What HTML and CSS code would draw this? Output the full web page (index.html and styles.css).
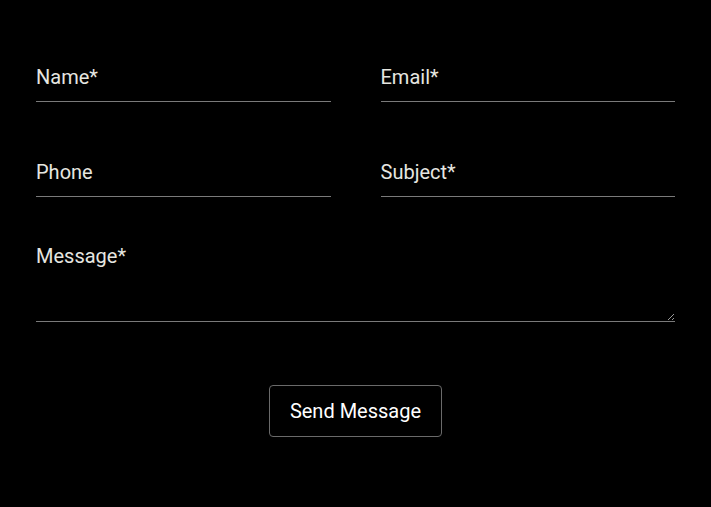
FILE: index.html
```html
<!DOCTYPE html>
<html lang="en">
<head>
<meta charset="utf-8">
<link rel="stylesheet" href="styles.css">
</head>
<body>
<form class="contact">
  <div class="row">
    <input class="field" type="text" placeholder="Name*">
    <input class="field" type="email" placeholder="Email*">
  </div>
  <div class="row">
    <input class="field" type="tel" placeholder="Phone">
    <input class="field" type="text" placeholder="Subject*">
  </div>
  <textarea class="field message" placeholder="Message*"></textarea>
  <div class="actions">
    <button class="send" type="button">Send Message</button>
  </div>
</form>
</body>
</html>
```
FILE: styles.css
```css
html, body {
  margin: 0;
  background: #000;
  color-scheme: dark;
}
body {
  font-family: Roboto, "Liberation Sans", sans-serif;
}
.contact {
  padding: 51px 36px 0 36px;
  display: flex;
  flex-direction: column;
  gap: 44px;
}
.row {
  display: flex;
  gap: 50px;
}
.field {
  flex: 1;
  min-width: 0;
  box-sizing: border-box;
  height: 51px;
  background: transparent;
  border: none;
  border-bottom: 1px solid #7a7a7a;
  border-radius: 0;
  padding: 2px 0 0 0;
  font-family: Roboto, "Liberation Sans", sans-serif;
  font-size: 20px;
  color: #e8e8e8;
  outline: none;
}
.field::placeholder {
  color: #e6e6e0;
  opacity: 1;
}
.message {
  flex: none;
  height: 81px;
  padding-top: 3px;
  line-height: 24px;
  resize: vertical;
  display: block;
  width: 100%;
}
.actions {
  display: flex;
  justify-content: center;
  padding-top: 19px;
}
.send {
  width: 173px;
  height: 52px;
  background: #000;
  border: 1px solid #6a6a6a;
  border-radius: 4px;
  color: #fff;
  font-family: Roboto, "Liberation Sans", sans-serif;
  font-size: 20px;
  cursor: pointer;
}
```
